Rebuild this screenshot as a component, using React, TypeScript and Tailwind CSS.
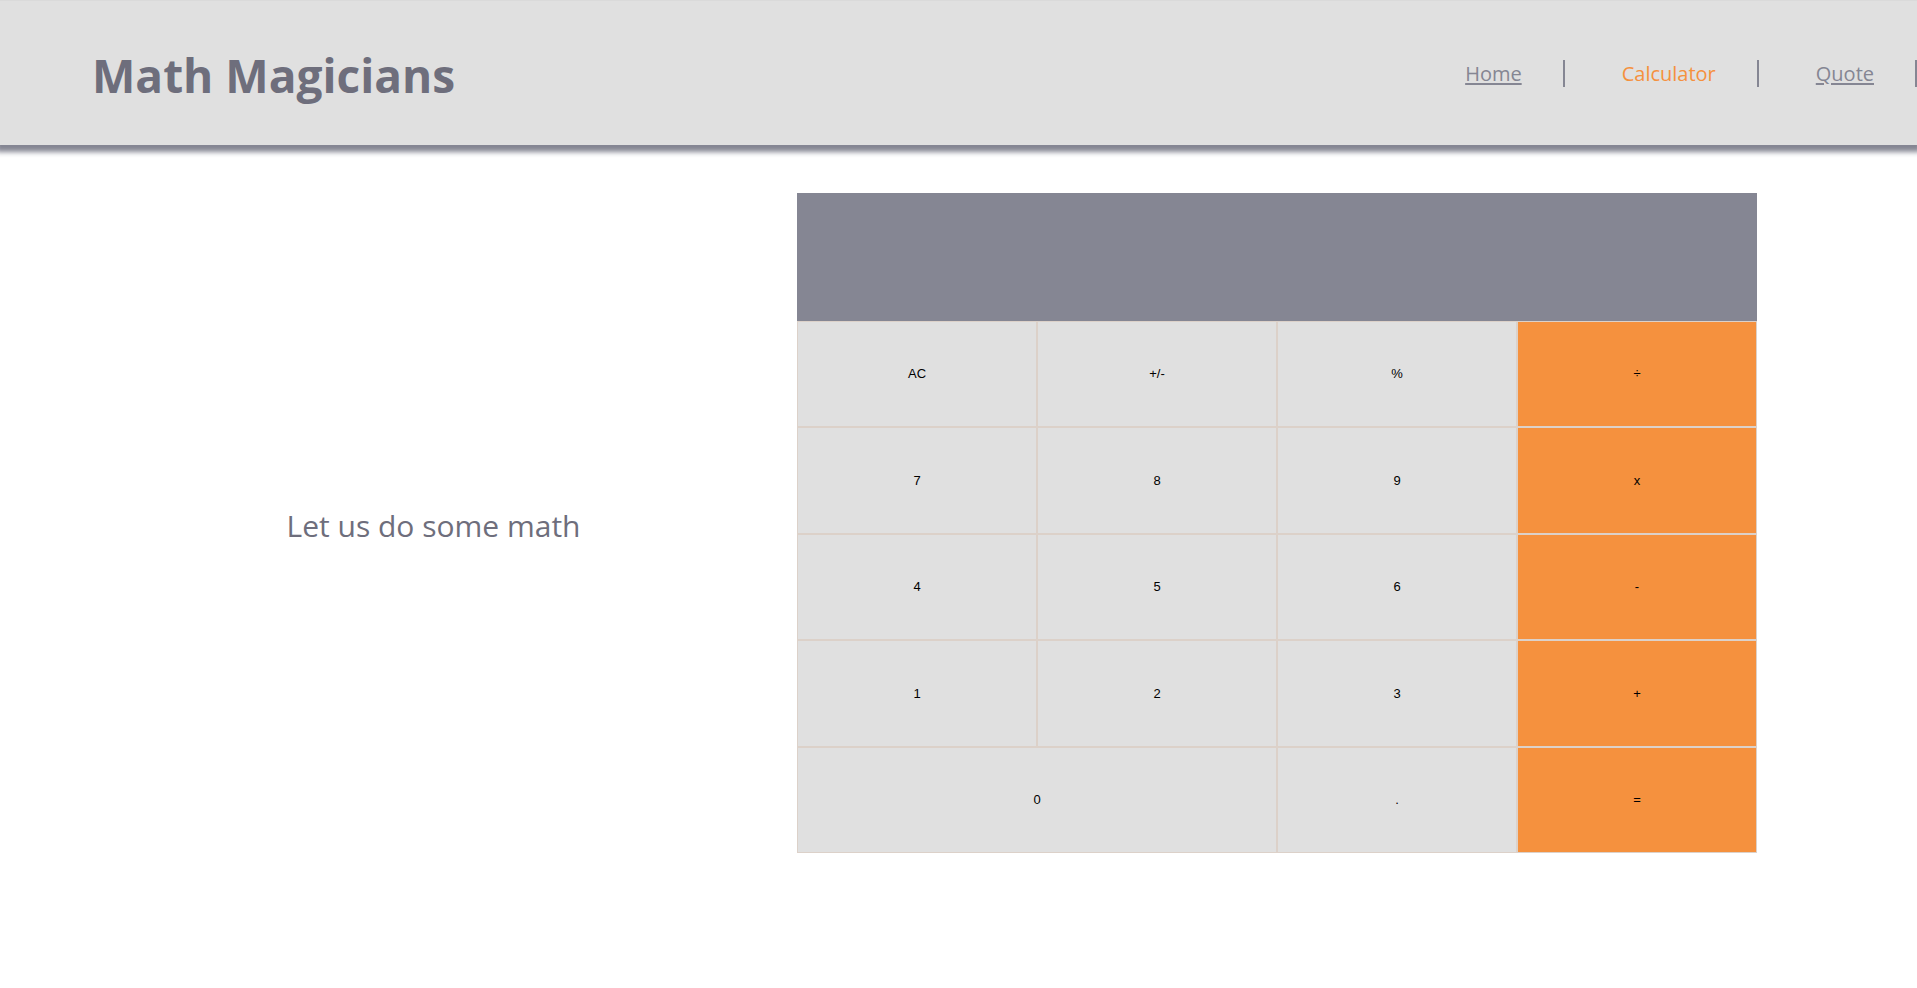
const navItems = [
  { label: 'Home', href: '#home' },
  { label: 'Calculator', href: '#calculator', active: true },
  { label: 'Quote', href: '#quote' },
];

const keys = [
  'AC', '+/-', '%', '÷',
  '7', '8', '9', 'x',
  '4', '5', '6', '-',
  '1', '2', '3', '+',
  '0', '.', '=',
];

const operators = ['÷', 'x', '-', '+', '='];

function Header() {
  return (
    <header className="flex h-[145px] items-center justify-between border-t border-[#dadada] bg-[#e0e0e0] pl-[92px] shadow-[0_3px_5px_4px_#858693]">
      <h1 className="pt-1 text-[46px] font-bold text-[#6e6e7c]">Math Magicians</h1>
      <nav aria-label="Main">
        <ul className="flex">
          {navItems.map((item) => (
            <li key={item.label} className="ml-[57px] border-r-2 border-[#858693] pr-[41px] text-xl leading-[27px]">
              <a
                href={item.href}
                aria-current={item.active ? 'page' : undefined}
                className={item.active ? 'text-[#f5913e]' : 'text-[#858693] underline decoration-2 underline-offset-2'}
              >
                {item.label}
              </a>
            </li>
          ))}
        </ul>
      </nav>
    </header>
  );
}

function Calculator() {
  return (
    <div>
      <output aria-label="Result" className="block h-32 bg-[#858693]" />
      <div className="grid min-h-[532px] auto-rows-fr grid-cols-4">
        {keys.map((key) => (
          <button
            key={key}
            type="button"
            className={`border border-[#dcd1c9] font-['Liberation_Sans',sans-serif] text-[13px] text-black ${
              operators.includes(key) ? 'bg-[#f5913e]' : 'bg-[#e0e0e0]'
            } ${key === '0' ? 'col-span-2' : ''}`}
          >
            {key}
          </button>
        ))}
      </div>
    </div>
  );
}

export default function App() {
  return (
    <div className="min-h-screen bg-white font-['Open_Sans',sans-serif]">
      <Header />
      <main className="grid grid-cols-[797fr_960fr] items-center pt-12 pr-40">
        <h2 className="pt-1 pl-[70px] text-center text-[30px] text-[#6e6e7c]">Let us do some math</h2>
        <Calculator />
      </main>
    </div>
  );
}
